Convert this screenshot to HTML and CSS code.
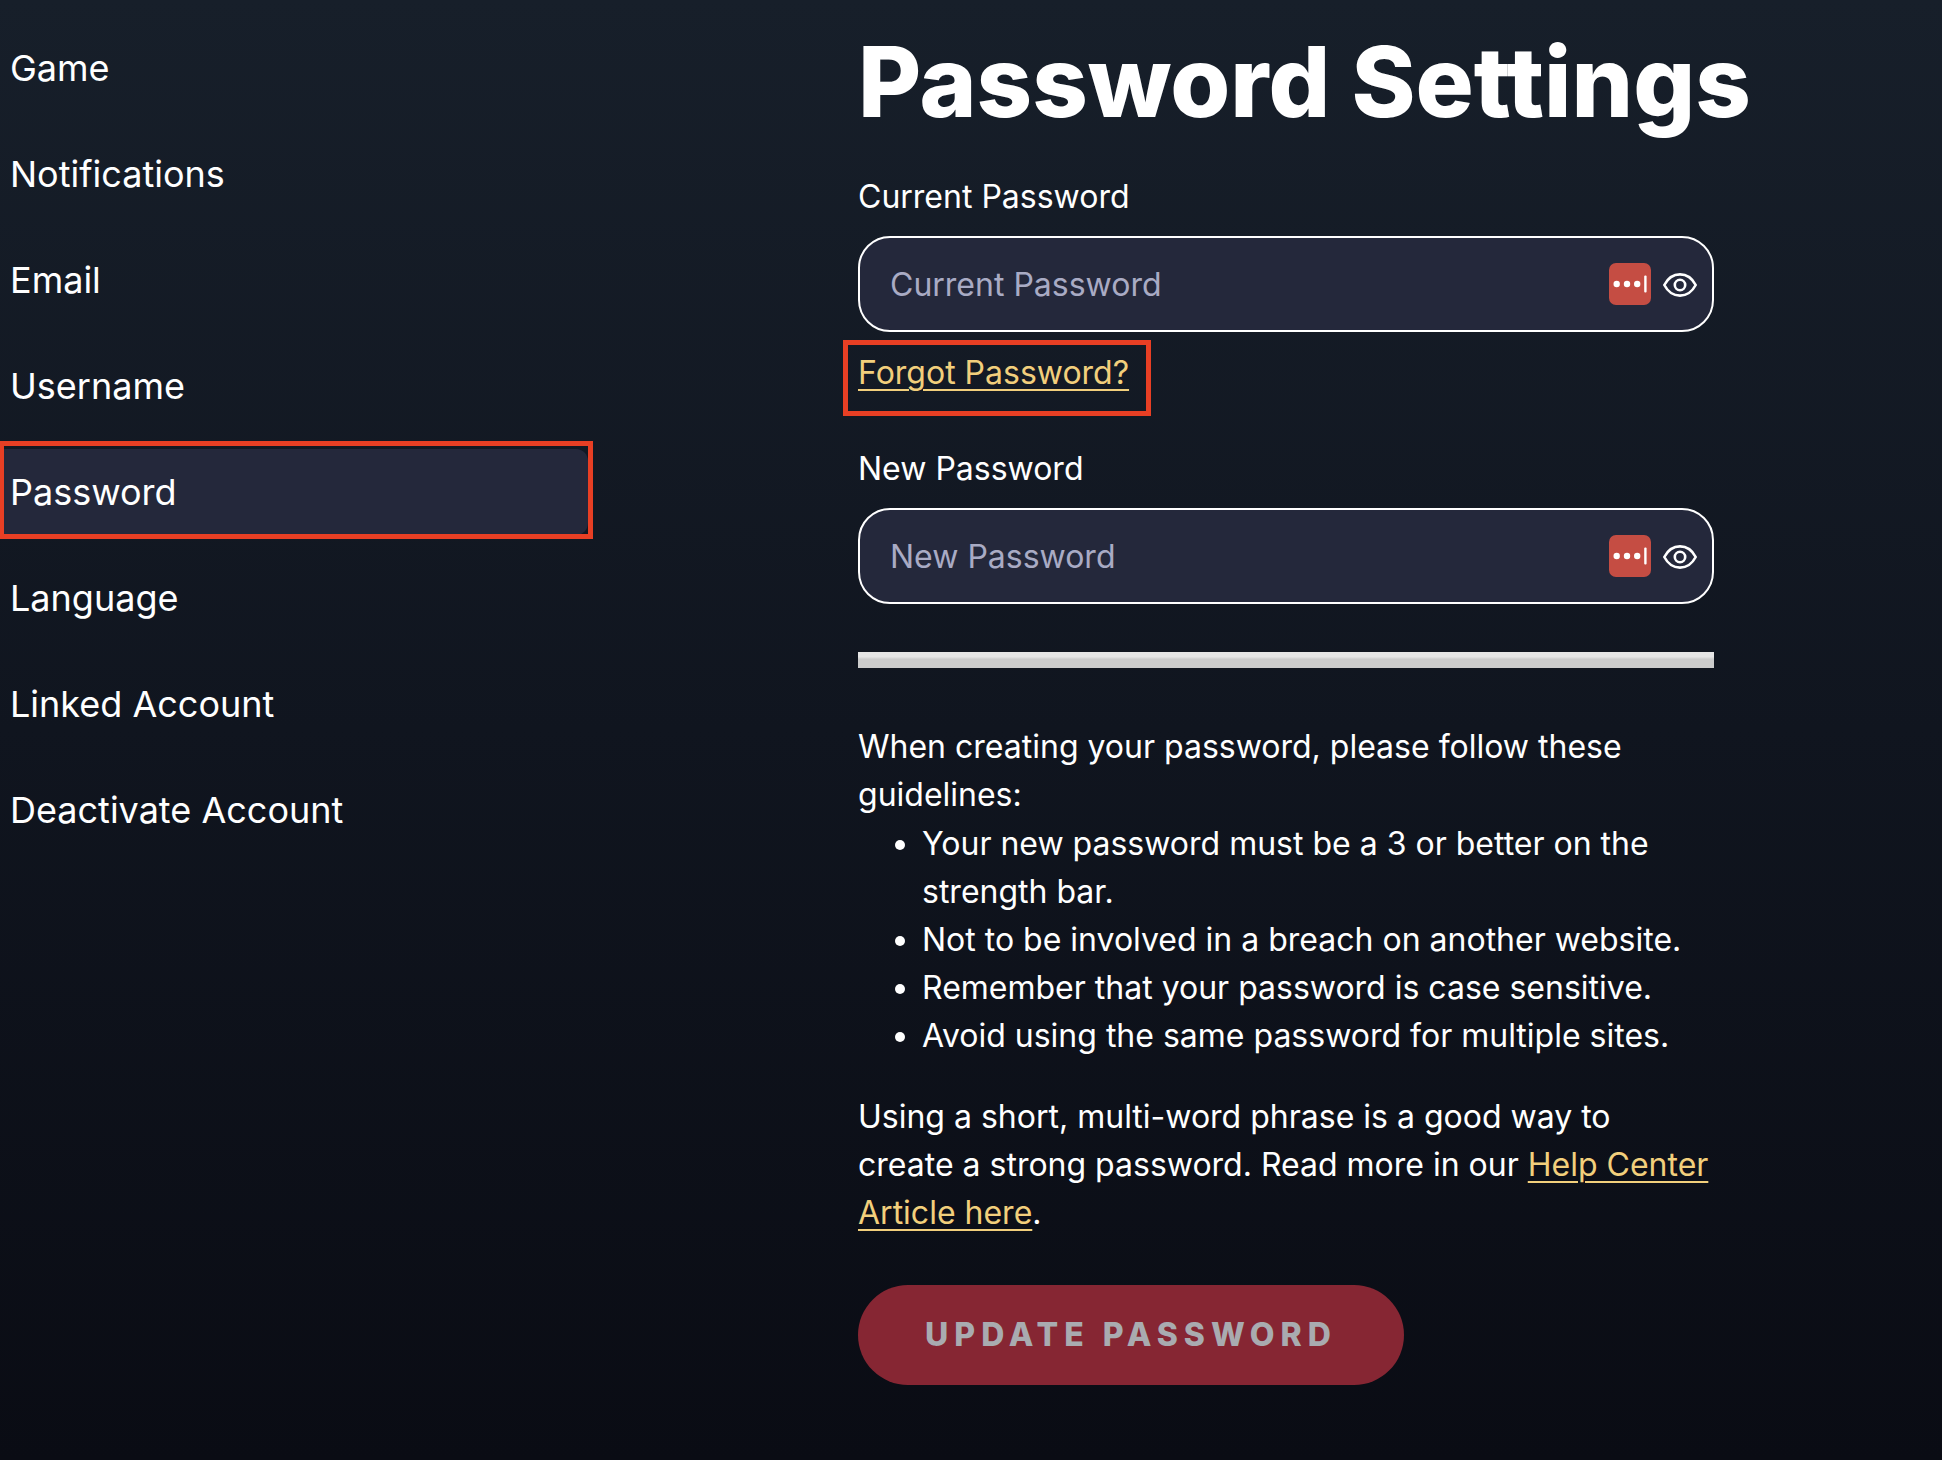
FILE: index.html
```html
<!DOCTYPE html>
<html lang="en">
<head>
    <meta charset="UTF-8">
    <meta name="viewport" content="width=device-width, initial-scale=1.0">
    <title>Password Settings</title>
    <link rel="stylesheet" href="styles.css">
</head>
<body>

    <div class="settings">
        <nav class="side-nav">
            <a href="#game">Game</a>
            <a href="#notifications">Notifications</a>
            <a href="#email">Email</a>
            <a href="#username">Username</a>
            <a href="#password" class="active" aria-current="page">Password</a>
            <a href="#language">Language</a>
            <a href="#linked">Linked Account</a>
            <a href="#deactivate">Deactivate Account</a>
        </nav>

        <main class="content">
            <h1>Password Settings</h1>

            <form>
                <label for="currentPassword">Current Password</label>
                <div class="field">
                    <input type="password" id="currentPassword" placeholder="Current Password">
                    <div class="field-icons">
                        <button type="button" class="fill-btn" aria-label="Fill password">
                            <svg width="42" height="42" viewBox="0 0 42 42">
                                <rect width="42" height="42" rx="7" fill="#c54d43"/>
                                <g fill="#fff">
                                    <circle cx="7.7" cy="21" r="3.2"/>
                                    <circle cx="18" cy="21" r="3.2"/>
                                    <circle cx="28.2" cy="21" r="3.2"/>
                                    <rect x="35.2" y="12.5" width="2.4" height="17" rx="1"/>
                                </g>
                            </svg>
                        </button>
                        <button type="button" class="eye-btn" aria-label="Show password">
                            <svg width="36" height="28" viewBox="0 -2 36 28" fill="none" stroke="#fff" stroke-width="2.6">
                                <path d="M2.3 13C6 6 11.5 2.4 18 2.4S30 6 33.7 13C30 20 24.5 23.6 18 23.6S6 20 2.3 13Z" stroke-linejoin="round"/>
                                <circle cx="18" cy="13" r="5.2"/>
                            </svg>
                        </button>
                    </div>
                </div>
                <a href="#forgot" class="forgot">Forgot Password?</a>

                <label for="newPassword">New Password</label>
                <div class="field">
                    <input type="password" id="newPassword" placeholder="New Password">
                    <div class="field-icons">
                        <button type="button" class="fill-btn" aria-label="Fill password">
                            <svg width="42" height="42" viewBox="0 0 42 42">
                                <rect width="42" height="42" rx="7" fill="#c54d43"/>
                                <g fill="#fff">
                                    <circle cx="7.7" cy="21" r="3.2"/>
                                    <circle cx="18" cy="21" r="3.2"/>
                                    <circle cx="28.2" cy="21" r="3.2"/>
                                    <rect x="35.2" y="12.5" width="2.4" height="17" rx="1"/>
                                </g>
                            </svg>
                        </button>
                        <button type="button" class="eye-btn" aria-label="Show password">
                            <svg width="36" height="28" viewBox="0 -2 36 28" fill="none" stroke="#fff" stroke-width="2.6">
                                <path d="M2.3 13C6 6 11.5 2.4 18 2.4S30 6 33.7 13C30 20 24.5 23.6 18 23.6S6 20 2.3 13Z" stroke-linejoin="round"/>
                                <circle cx="18" cy="13" r="5.2"/>
                            </svg>
                        </button>
                    </div>
                </div>
                <progress class="strength" value="0" max="4" aria-label="Password strength"></progress>

                <p>When creating your password, please follow these guidelines:</p>
                <ul>
                    <li>Your new password must be a 3 or better on the strength bar.</li>
                    <li>Not to be involved in a breach on another website.</li>
                    <li>Remember that your password is case sensitive.</li>
                    <li>Avoid using the same password for multiple sites.</li>
                </ul>
                <p>Using a short, multi-word phrase is a good way to create a strong password. Read more in our <a href="#help">Help Center Article here</a>.</p>

                <button type="submit" class="submit-btn" disabled>Update Password</button>
            </form>
        </main>
    </div>

</body>
</html>
```

FILE: styles.css
```css
* {
    box-sizing: border-box;
}
body {
    margin: 0;
    min-height: 100vh;
    font-family: Inter, "Liberation Sans", sans-serif;
    font-size: 32px;
    line-height: 48px;
    color: #ffffff;
    background: linear-gradient(#171f2a, #10151f 50%, #0a0c14);
}
a {
    color: #f2cf7c;
    text-decoration-thickness: 2px;
    text-underline-offset: 5px;
}

/* Layout */
.settings {
    display: grid;
    grid-template-columns: minmax(0, 588fr) minmax(0, 856fr);
    column-gap: 270px;
    padding: 25px 228px 72px 0;
}

/* Side menu */
.side-nav {
    display: flex;
    flex-direction: column;
    gap: 20px;
}
.side-nav a {
    padding: 19px 10px;
    border-radius: 0 12px 12px 0;
    font-size: 36px;
    color: #ffffff;
    text-decoration: none;
}
.side-nav .active {
    position: relative;
    background-color: #24283b;
}

/* Red highlight frames */
.side-nav .active::after,
.forgot::after {
    content: "";
    position: absolute;
    border: 5px solid #e83f24;
}
.side-nav .active::after {
    inset: -8px -5px -4px -1px;
}
.forgot::after {
    inset: -9px -22px -19px -15px;
}

/* Password form */
h1 {
    margin: 0 0 34px;
    font-size: 97px;
    line-height: 114px;
    font-weight: 800;
    white-space: nowrap;
}
label {
    display: block;
    margin-bottom: 15px;
}
.field {
    position: relative;
}
.field input {
    display: block;
    width: 100%;
    height: 96px;
    padding: 0 120px 0 30px;
    border: 2px solid #ffffff;
    border-radius: 32px;
    font: inherit;
    color: #ffffff;
    background-color: #24283b;
}
.field input::placeholder {
    color: #a9abc4;
    opacity: 1;
}
.field-icons {
    position: absolute;
    top: 0;
    bottom: 0;
    right: 16px;
    display: flex;
    align-items: center;
    gap: 11px;
}
.field-icons button {
    padding: 0;
    border: none;
    background: none;
    cursor: pointer;
}
.field-icons svg {
    display: block;
}
.forgot {
    position: relative;
    display: inline-block;
    margin: 17px 0 48px;
}
.strength {
    display: block;
    width: 100%;
    height: 16px;
    margin: 48px 0 55px;
    border: none;
    appearance: none;
    background: linear-gradient(#e6e6e6 30%, #cccccc 45%);
}
.strength::-webkit-progress-bar {
    background: transparent;
}
p {
    margin: 0;
}
ul {
    margin: 1px 0 33px;
    padding-left: 64px;
}
.submit-btn {
    margin-top: 48px;
    padding: 26px 67px;
    border: none;
    border-radius: 50px;
    font: inherit;
    font-weight: 800;
    letter-spacing: 6px;
    text-transform: uppercase;
    color: #a9abb0;
    background-color: #862633;
}
```
